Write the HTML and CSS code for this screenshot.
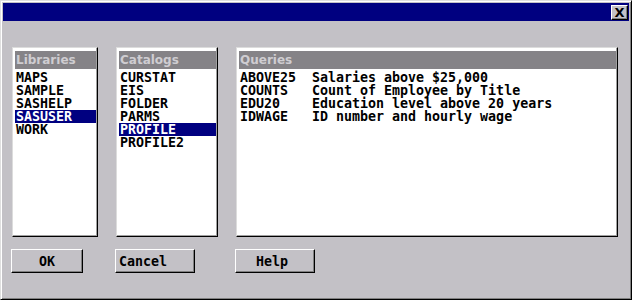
FILE: index.html
```html
<!DOCTYPE html>
<html lang="en">
<head>
    <meta charset="UTF-8">
    <meta name="viewport" content="width=device-width, initial-scale=1.0">
    <title>Select Query</title>
    <link rel="stylesheet" href="styles.css">
</head>
<body>
    <div class="window">
        <div class="titlebar">
            <button class="close">X</button>
        </div>

        <div class="lists">
            <div class="listbox libraries">
                <div class="listhead">Libraries</div>
                <ul>
                    <li>MAPS</li>
                    <li>SAMPLE</li>
                    <li>SASHELP</li>
                    <li class="selected">SASUSER</li>
                    <li>WORK</li>
                </ul>
            </div>
            <div class="listbox catalogs">
                <div class="listhead">Catalogs</div>
                <ul>
                    <li>CURSTAT</li>
                    <li>EIS</li>
                    <li>FOLDER</li>
                    <li>PARMS</li>
                    <li class="selected">PROFILE</li>
                    <li>PROFILE2</li>
                </ul>
            </div>
            <div class="listbox queries">
                <div class="listhead">Queries</div>
                <ul>
                    <li><span class="qname">ABOVE25</span>Salaries above $25,000</li>
                    <li><span class="qname">COUNTS</span>Count of Employee by Title</li>
                    <li><span class="qname">EDU20</span>Education level above 20 years</li>
                    <li><span class="qname">IDWAGE</span>ID number and hourly wage</li>
                </ul>
            </div>
        </div>

        <div class="buttons">
            <button class="btn ok">OK</button>
            <button class="btn cancel">Cancel</button>
            <button class="btn help">Help</button>
        </div>
    </div>
</body>
</html>
```

FILE: styles.css
```css
body {
    margin: 0;
    padding: 0;
    background-color: #c3c1c6;
    font-family: "DejaVu Sans Mono", "Liberation Mono", monospace;
}
.window {
    box-sizing: border-box;
    width: 632px;
    height: 300px;
    padding: 2px;
    background-color: #c3c1c6;
    border: 1px solid;
    border-color: #dfdfdf #000 #000 #dfdfdf;
    box-shadow: inset 1px 1px #fff, inset -1px -1px #808080;
}
.titlebar {
    height: 18px;
    background-color: #000080;
    display: flex;
    justify-content: flex-end;
    align-items: flex-start;
    padding-right: 1px;
}
.close {
    box-sizing: border-box;
    width: 17px;
    height: 15px;
    margin-top: 2px;
    padding: 0;
    background-color: #c3c1c6;
    border: 1px solid;
    border-color: #fff #000 #000 #fff;
    box-shadow: inset -1px -1px #808080;
    font-family: "DejaVu Sans", sans-serif;
    font-weight: bold;
    font-size: 13px;
    line-height: 12px;
    color: #000;
}
.lists {
    display: flex;
    margin-top: 26px;
    margin-left: 9px;
    height: 190px;
}
.listbox {
    box-sizing: border-box;
    height: 190px;
    padding: 3px 1px 1px 2px;
    background-color: #fff;
    border: 1px solid;
    border-color: #dcdcdc #000 #000 #dcdcdc;
    box-shadow: inset -1px -1px #a0a0a0;
}
.libraries {
    width: 86px;
}
.catalogs {
    width: 102px;
    margin-left: 18px;
}
.queries {
    width: 382px;
    margin-left: 18px;
}
.listhead {
    height: 18px;
    background-color: #858387;
    color: #cfcdd1;
    font-family: "DejaVu Sans", sans-serif;
    font-weight: bold;
    font-size: 12px;
    line-height: 19px;
    padding-left: 1px;
}
ul {
    list-style: none;
    margin: 2px 0 0 0;
    padding: 0;
}
li {
    height: 13px;
    line-height: 13px;
    padding-left: 1px;
    font-size: 13.3px;
    font-weight: bold;
    color: #000;
    white-space: pre;
}
li.selected {
    background-color: #000080;
    color: #fff;
}
.qname {
    display: inline-block;
    width: 72px;
}
.buttons {
    display: flex;
    margin-top: 12px;
    margin-left: 8px;
}
.btn {
    box-sizing: border-box;
    height: 24px;
    padding: 0;
    background-color: #c3c1c6;
    border: 1px solid;
    border-color: #fff #000 #000 #fff;
    box-shadow: inset -1px -1px #808080;
    font-family: "DejaVu Sans Mono", "Liberation Mono", monospace;
    font-size: 13.3px;
    font-weight: bold;
    color: #000;
}
.ok {
    width: 72px;
}
.cancel {
    width: 80px;
    margin-left: 32px;
    text-align: left;
    padding-left: 3px;
}
.help {
    width: 80px;
    margin-left: 40px;
    padding-right: 6px;
}
```
